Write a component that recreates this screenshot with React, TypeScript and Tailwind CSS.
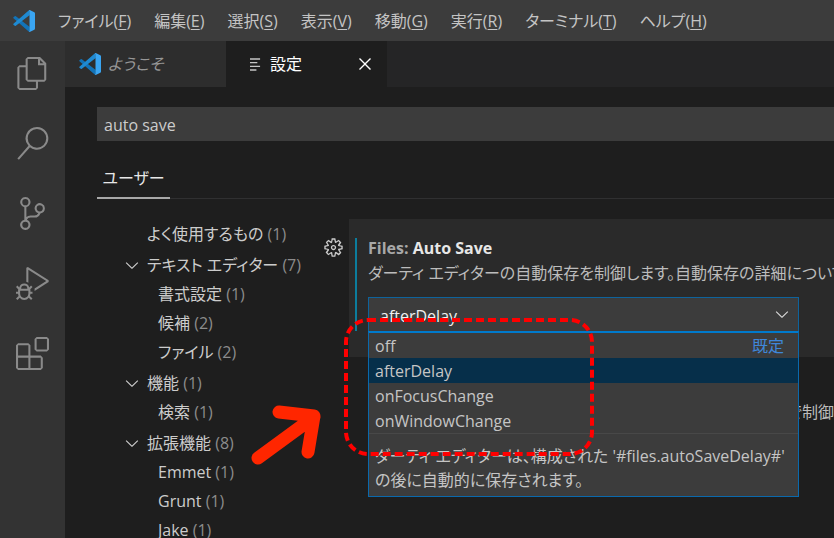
import type { ReactNode } from "react";
import {
  VscChevronDown,
  VscClose,
  VscDebugAlt,
  VscExtensions,
  VscFiles,
  VscGear,
  VscSearch,
  VscSourceControl,
} from "react-icons/vsc";

const menus = [
  { label: "ファイル", key: "F" },
  { label: "編集", key: "E" },
  { label: "選択", key: "S" },
  { label: "表示", key: "V" },
  { label: "移動", key: "G" },
  { label: "実行", key: "R" },
  { label: "ターミナル", key: "T" },
  { label: "ヘルプ", key: "H" },
];

const activities = [
  { name: "エクスプローラー", Icon: VscFiles },
  { name: "検索", Icon: VscSearch },
  { name: "ソース管理", Icon: VscSourceControl },
  { name: "実行とデバッグ", Icon: VscDebugAlt },
  { name: "拡張機能", Icon: VscExtensions },
];

type Group = {
  name: string;
  count: number;
  children: { name: string; count: number }[];
};

const groups: Group[] = [
  { name: "よく使用するもの", count: 1, children: [] },
  {
    name: "テキスト エディター",
    count: 7,
    children: [
      { name: "書式設定", count: 1 },
      { name: "候補", count: 2 },
      { name: "ファイル", count: 2 },
    ],
  },
  { name: "機能", count: 1, children: [{ name: "検索", count: 1 }] },
  {
    name: "拡張機能",
    count: 8,
    children: [
      { name: "Emmet", count: 1 },
      { name: "Grunt", count: 1 },
      { name: "Jake", count: 1 },
    ],
  },
];

const options = ["off", "afterDelay", "onFocusChange", "onWindowChange"];

function Logo() {
  return (
    <svg viewBox="0 0 100 100" className="size-[22px] shrink-0" aria-hidden="true">
      <path d="M2 33 L8 28 Q10 26 13 28 L76 77 V99 L70 97 L2 38 Q0 35 2 33Z" fill="#1273b8" />
      <path d="M2 67 L8 72 Q10 74 13 72 L76 23 V1 L70 3 L2 62 Q0 65 2 67Z" fill="#1f8ad2" />
      <path d="M71 1 L76 0 L97 10 Q100 12 100 16 V84 Q100 88 97 90 L76 100 L71 99 Q75 98 75 93 V7 Q75 2 71 1Z" fill="#3aa5f2" />
    </svg>
  );
}

function Count({ value }: { value: number }) {
  return <span className="text-[#8c8c8c]"> ({value})</span>;
}

function TreeRow({ children, className }: { children: ReactNode; className: string }) {
  return (
    <button type="button" className={"flex h-[29px] w-full items-center whitespace-pre text-left " + className}>
      {children}
    </button>
  );
}

function Tree() {
  return (
    <nav aria-label="設定の目次" className="flex w-[226px] shrink-0 flex-col gap-[2px] pl-[25px]">
      {groups.map((group) => (
        <div key={group.name}>
          <TreeRow className="">
            <span className="flex w-[25px] shrink-0">
              {group.children.length > 0 && <VscChevronDown className="size-5" />}
            </span>
            {group.name}
            <Count value={group.count} />
          </TreeRow>
          {group.children.map((child) => (
            <TreeRow key={child.name} className="pl-[36px]">
              {child.name}
              <Count value={child.count} />
            </TreeRow>
          ))}
        </div>
      ))}
    </nav>
  );
}

function AutoSaveSelect() {
  return (
    <div className="relative w-[431px]">
      <select
        aria-label="Files: Auto Save"
        defaultValue="afterDelay"
        className="block h-[35px] w-full appearance-none border border-[#0e639c] bg-[#3c3c3c] pt-[2px] pl-[11px] text-[#f0f0f0] outline-none"
      >
        {options.map((option) => (
          <option key={option}>{option}</option>
        ))}
      </select>
      <VscChevronDown className="pointer-events-none absolute top-[7px] right-[7px] size-5 text-[#d8d8d8]" />
      <div className="absolute top-[34px] left-0 z-10 w-full border border-t-2 border-[#0a69ad] border-t-[#007acc] bg-[#3c3c3c] text-[#c5c5c5]">
        <ul role="listbox" aria-label="Files: Auto Save">
          {options.map((option) => (
            <li
              key={option}
              role="option"
              aria-selected={option === "afterDelay"}
              className="flex h-[25px] items-center justify-between pr-[14px] pl-[6px] aria-selected:bg-[#062f4a]"
            >
              {option}
              {option === "off" && <span className="text-[#3f87d9]">既定</span>}
            </li>
          ))}
        </ul>
        <p className="border-t border-[#484848] px-[6px] pt-[10px] pb-[4px] leading-6 whitespace-nowrap">
          ダーティ エディターは、構成された '#files.autoSaveDelay#'
          <br />
          の後に自動的に保存されます。
        </p>
      </div>
      <svg
        className="pointer-events-none absolute top-[20px] left-[-24px] z-20 h-[140px] w-[250px]"
        viewBox="0 0 250 140"
        fill="none"
        aria-hidden="true"
      >
        <rect x="2" y="3" width="246" height="134" rx="22" stroke="#ff0000" strokeWidth="4" strokeDasharray="8 4" />
      </svg>
      <svg
        className="pointer-events-none absolute top-[103px] left-[-120px] z-20 h-[70px] w-[80px]"
        viewBox="0 0 80 70"
        fill="none"
        aria-hidden="true"
      >
        <path
          d="M10 58 L66 17 M31 12 L66 16 L60 52"
          stroke="#ff2600"
          strokeWidth="13"
          strokeLinecap="round"
          strokeLinejoin="round"
        />
      </svg>
    </div>
  );
}

export default function App() {
  return (
    <div className="flex h-screen flex-col overflow-hidden bg-[#1e1e1e] font-['Open_Sans','Noto_Sans_CJK_JP',sans-serif] text-[16px] text-[#cccccc] [font-feature-settings:'palt']">
      <header className="flex h-[41px] shrink-0 items-center bg-[#3c3c3c] pl-[13px]">
        <Logo />
        <nav className="ml-[23px] flex gap-[23px] whitespace-nowrap text-[#c4c4c4]">
          {menus.map((menu) => (
            <button type="button" key={menu.key}>
              {menu.label}(<span className="underline underline-offset-2">{menu.key}</span>)
            </button>
          ))}
        </nav>
      </header>
      <div className="flex min-h-0 flex-1">
        <aside className="flex w-[65px] shrink-0 flex-col items-center gap-[37px] bg-[#333333] pt-4 text-[#8a8a8a]">
          {activities.map(({ name, Icon }) => (
            <button type="button" key={name} aria-label={name}>
              <Icon className="size-[33px]" />
            </button>
          ))}
        </aside>
        <main className="flex min-w-0 flex-1 flex-col">
          <div className="flex h-[46px] shrink-0 bg-[#252526]">
            <button type="button" className="flex w-[161px] items-center gap-[7px] bg-[#2d2d2d] pl-[14px] text-[#969696] italic">
              <Logo />
              ようこそ
            </button>
            <div className="flex w-[161px] items-center bg-[#1e1e1e] pr-[11px] pl-[24px] text-white">
              <svg viewBox="0 0 12 14" className="mr-[9px] h-[13px] w-[11px]" stroke="#c5c5c5" strokeWidth="1.4" aria-hidden="true">
                <path d="M0 1H11M0 5H8M0 9H11M0 13H7" />
              </svg>
              <span className="flex-1">設定</span>
              <button type="button" aria-label="閉じる">
                <VscClose className="size-[22px]" />
              </button>
            </div>
          </div>
          <div className="flex min-h-0 flex-1 flex-col pt-5 pl-8">
            <input
              type="text"
              aria-label="設定の検索"
              defaultValue="auto save"
              className="h-[34px] w-full shrink-0 bg-[#3c3c3c] px-[7px] pt-[2px] outline-none"
            />
            <div className="mt-[15px] flex h-[43px] shrink-0 border-b border-[#303031]">
              <button type="button" className="-mb-px w-[73px] border-b-2 border-[#a8a8a8] pt-[2px] text-[#e7e7e7]">
                ユーザー
              </button>
            </div>
            <div className="flex min-h-0 flex-1 pt-5">
              <Tree />
              <VscGear className="mt-[18px] mr-[5px] size-[21px] shrink-0" />
              <div className="min-w-0 flex-1">
                <section className="flex h-[138px] bg-[#2a2a2a] pt-[19px] pl-[6px]">
                  <div className="mr-[11px] h-[93px] w-[2px] shrink-0 bg-[#0c7d9d]" />
                  <div className="min-w-0">
                    <h2 className="leading-[21px] font-bold text-[#a8a8a8]">
                      Files: <span className="text-[#e7e7e7]">Auto Save</span>
                    </h2>
                    <p className="pt-px mb-[10px] leading-[27px] whitespace-nowrap text-[#bcbcbc]">
                      ダーティ エディターの自動保存を制御します。自動保存の詳細については
                    </p>
                    <AutoSaveSelect />
                  </div>
                </section>
                <p className="mt-[43px] text-right leading-6 text-[#bcbcbc]">で制御</p>
              </div>
            </div>
          </div>
        </main>
      </div>
    </div>
  );
}
